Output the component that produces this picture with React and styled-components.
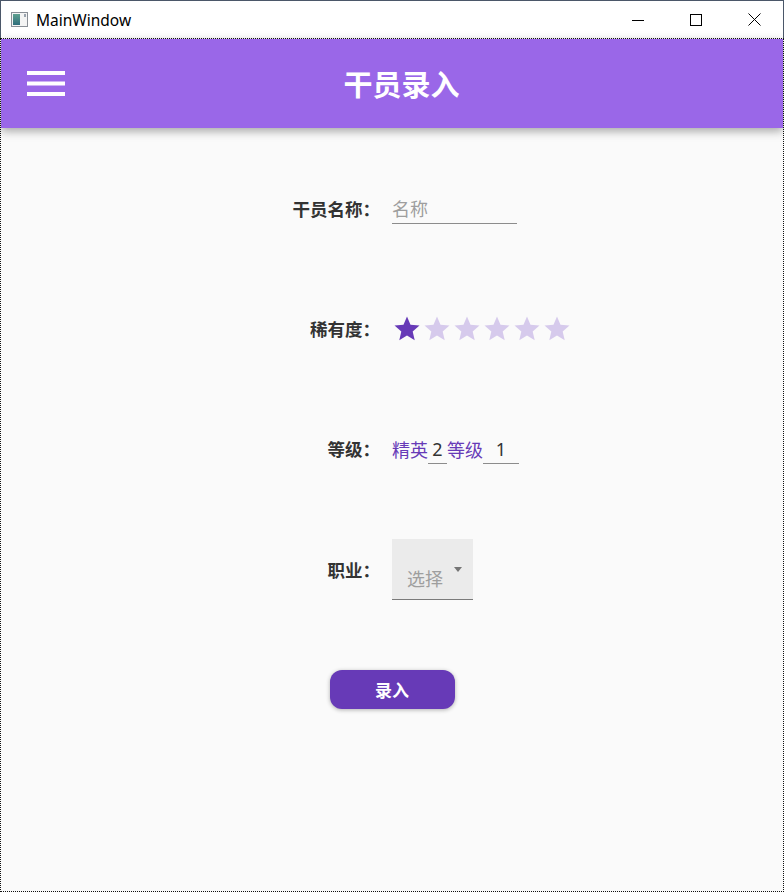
import React, { useState } from 'react';
import styled, { createGlobalStyle } from 'styled-components';

const GlobalStyle = createGlobalStyle`
  html, body {
    margin: 0;
    padding: 0;
    background: #fafafa;
  }
  * { box-sizing: border-box; }
  body {
    font-family: "Noto Sans", "Noto Sans CJK SC", sans-serif;
  }
`;

const Window = styled.div`
  width: 784px;
  height: 892px;
  display: flex;
  flex-direction: column;
  background: #fafafa;
`;

const TitleBar = styled.div`
  height: 38px;
  flex: none;
  display: flex;
  align-items: center;
  background: #ffffff;
  border: 1px solid #4b5769;
  border-bottom: none;
`;

const AppIcon = styled.svg`
  margin-left: 10px;
  flex: none;
`;

const WindowTitle = styled.span`
  margin-left: 8px;
  font-family: "Noto Sans", sans-serif;
  font-size: 15.5px;
  color: #000;
`;

const Controls = styled.div`
  margin-left: auto;
  display: flex;
  height: 100%;
`;

const ControlButton = styled.div`
  width: 58px;
  height: 100%;
  display: flex;
  align-items: center;
  justify-content: center;
`;

const Content = styled.div`
  flex: 1;
  display: flex;
  flex-direction: column;
  border: 1px dotted #111;
  background: #fafafa;
`;

const Header = styled.header`
  height: 89px;
  flex: none;
  display: flex;
  align-items: center;
  padding: 0 45px 0 26px;
  background: #9a67e8;
  box-shadow: 0 3px 9px rgba(0, 0, 0, 0.35);
  position: relative;
  z-index: 1;
`;

const MenuButton = styled.svg`
  flex: none;
  display: block;
`;

const Title = styled.h1`
  flex: 1;
  margin: 0;
  text-align: center;
  font-family: "Noto Sans CJK SC", sans-serif;
  font-size: 29px;
  font-weight: 700;
  line-height: 1;
  color: #ffffff;
`;

const Form = styled.div`
  display: flex;
  flex-direction: column;
  gap: 60px;
  padding-top: 51px;
`;

const Row = styled.div`
  height: 60px;
  display: grid;
  grid-template-columns: 1fr 1fr;
  align-items: center;
`;

const Label = styled.label`
  justify-self: end;
  padding-right: 12px;
  font-family: "Noto Sans CJK SC", sans-serif;
  font-size: 17.5px;
  font-weight: 700;
  line-height: 1;
  color: #333333;
`;

const Field = styled.div`
  display: flex;
  align-items: center;
`;

const TextInput = styled.input`
  width: ${p => p.$width}px;
  height: 29px;
  padding: 0;
  border: none;
  border-bottom: 1px solid #8c8c8c;
  background: transparent;
  outline: none;
  font-family: "Noto Sans", "Noto Sans CJK SC", sans-serif;
  font-size: 18px;
  color: #333333;
  text-align: ${p => (p.$center ? 'center' : 'left')};

  &::placeholder {
    color: #9e9e9e;
  }
`;

const Accent = styled.span`
  font-family: "Noto Sans CJK SC", sans-serif;
  font-size: 18px;
  line-height: 1;
  color: #673ab7;
`;

const StarButton = styled.button`
  width: 30px;
  height: 30px;
  padding: 0;
  border: none;
  background: none;
  cursor: pointer;

  svg {
    display: block;
    fill: ${p => (p.$on ? '#673ab7' : '#d6caec')};
  }
`;

const Select = styled.div`
  width: 81px;
  height: 61px;
  display: flex;
  justify-content: space-between;
  padding: 0 11px 0 15px;
  background: #ebebeb;
  border-bottom: 1px solid #7a7a7a;
`;

const SelectText = styled.span`
  align-self: flex-end;
  margin-bottom: 12px;
  font-family: "Noto Sans CJK SC", sans-serif;
  font-size: 18px;
  line-height: 1;
  color: #9e9e9e;
`;

const Caret = styled.span`
  margin-top: 28px;
  width: 0;
  height: 0;
  border-left: 4px solid transparent;
  border-right: 4px solid transparent;
  border-top: 5px solid #757575;
`;

const ButtonRow = styled.div`
  height: 60px;
  display: flex;
  align-items: center;
  justify-content: center;
`;

const SubmitButton = styled.button`
  width: 125px;
  height: 39px;
  border: none;
  border-radius: 12px;
  background: #673ab7;
  box-shadow: 0 1px 4px rgba(0, 0, 0, 0.3);
  font-family: "Noto Sans CJK SC", sans-serif;
  font-size: 17px;
  font-weight: 700;
  color: #ffffff;
  cursor: pointer;
`;

const StarIcon = () => (
  <svg width="30" height="30" viewBox="0 0 24 24">
    <path d="M12,17.27L18.18,21L16.54,13.97L22,9.24L14.81,8.62L12,2L9.19,8.62L2,9.24L7.45,13.97L5.82,21L12,17.27Z" />
  </svg>
);

const App = () => {
  const [rarity, setRarity] = useState(1);

  return (
    <Window>
      <GlobalStyle />
      <TitleBar>
        <AppIcon width="17" height="15" viewBox="0 0 17 15">
          <defs>
            <linearGradient id="ic" x1="0" y1="0" x2="0" y2="1">
              <stop offset="0" stopColor="#5fa08f" />
              <stop offset="1" stopColor="#2f6e7c" />
            </linearGradient>
          </defs>
          <rect x="0.5" y="0.5" width="16" height="14" fill="#f4f4f4" stroke="#8a8f96" />
          <rect x="2" y="2" width="7" height="11" fill="url(#ic)" />
          <rect x="13" y="2" width="2" height="3" fill="#9aa3ad" />
        </AppIcon>
        <WindowTitle>MainWindow</WindowTitle>
        <Controls>
          <ControlButton>
            <svg width="12" height="12" viewBox="0 0 12 12">
              <path d="M0 6.5H12" stroke="#000" strokeWidth="1" />
            </svg>
          </ControlButton>
          <ControlButton>
            <svg width="12" height="12" viewBox="0 0 12 12">
              <rect x="0.5" y="0.5" width="11" height="11" fill="none" stroke="#000" />
            </svg>
          </ControlButton>
          <ControlButton>
            <svg width="13" height="13" viewBox="0 0 13 13">
              <path d="M0.5 0.5L12.5 12.5M12.5 0.5L0.5 12.5" stroke="#000" strokeWidth="1" />
            </svg>
          </ControlButton>
        </Controls>
      </TitleBar>

      <Content>
        <Header>
          <MenuButton width="38" height="25" viewBox="0 0 38 25">
            <rect x="0" y="0" width="38" height="4" fill="#fff" />
            <rect x="0" y="10.5" width="38" height="4" fill="#fff" />
            <rect x="0" y="21" width="38" height="4" fill="#fff" />
          </MenuButton>
          <Title>干员录入</Title>
        </Header>

        <Form>
          <Row>
            <Label>干员名称：</Label>
            <Field>
              <TextInput $width={125} placeholder="名称" />
            </Field>
          </Row>

          <Row>
            <Label>稀有度：</Label>
            <Field>
              {[1, 2, 3, 4, 5, 6].map(n => (
                <StarButton key={n} $on={n <= rarity} onClick={() => setRarity(n)}>
                  <StarIcon />
                </StarButton>
              ))}
            </Field>
          </Row>

          <Row>
            <Label>等级：</Label>
            <Field>
              <Accent>精英</Accent>
              <TextInput $width={19} $center defaultValue="2" />
              <Accent>等级</Accent>
              <TextInput $width={36} $center defaultValue="1" />
            </Field>
          </Row>

          <Row>
            <Label>职业：</Label>
            <Field>
              <Select>
                <SelectText>选择</SelectText>
                <Caret />
              </Select>
            </Field>
          </Row>

          <ButtonRow>
            <SubmitButton>录入</SubmitButton>
          </ButtonRow>
        </Form>
      </Content>
    </Window>
  );
};

export default App;
